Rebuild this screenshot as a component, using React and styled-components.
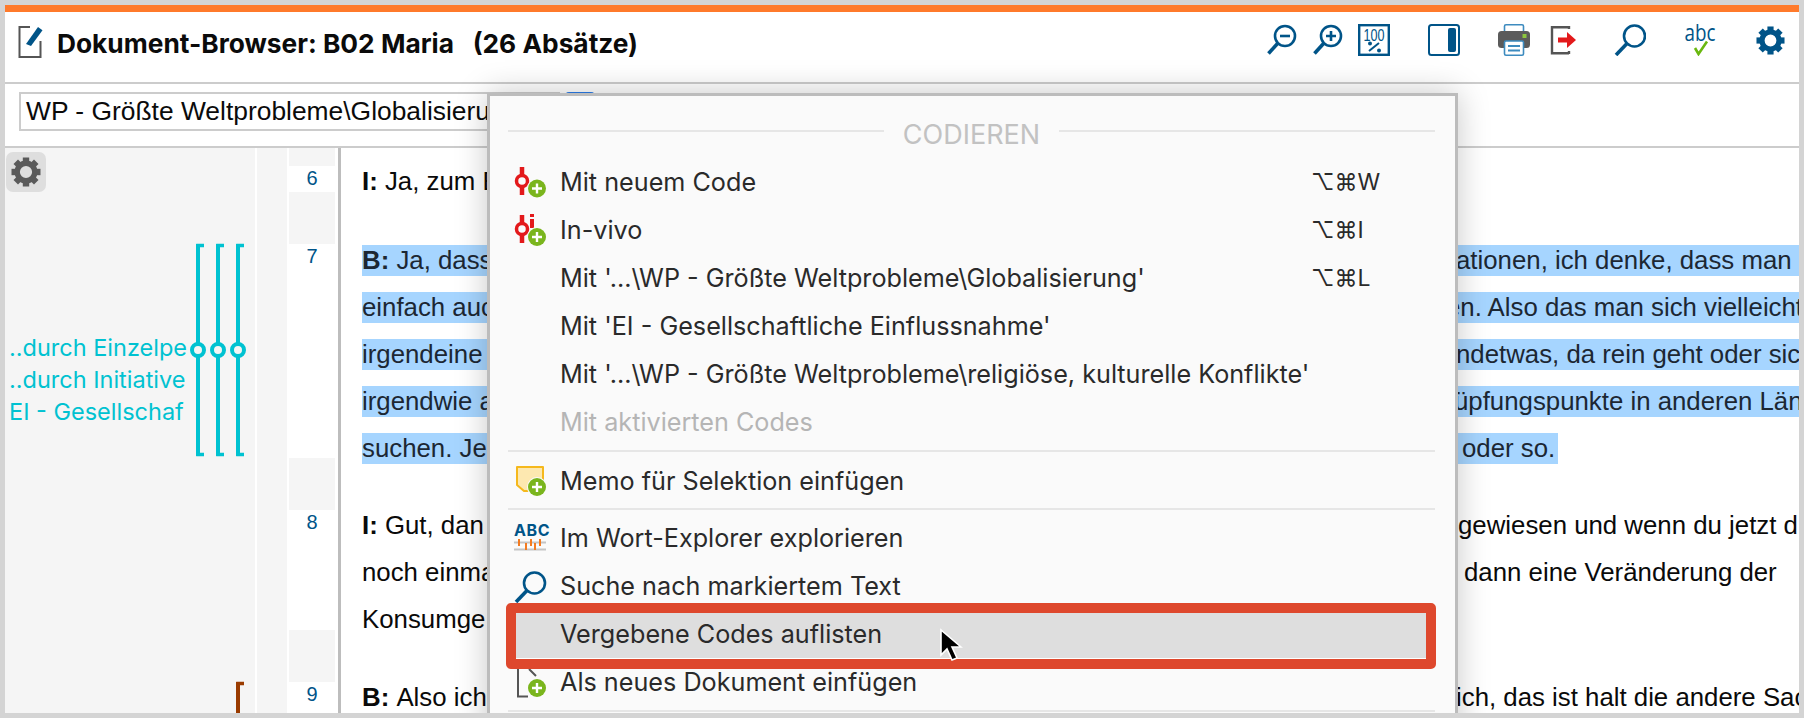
import React from 'react'
import styled, { createGlobalStyle } from 'styled-components'

const blue = '#005488'
const cyan = '#00c2d1'

const Global = createGlobalStyle`
  html, body { margin: 0; padding: 0; background: #d4d4d4; }
  #root { height: 718px; }
`

const Frame = styled.div`
  height: 718px;
  box-sizing: border-box;
  padding: 5px;
`
const Main = styled.div`
  position: relative;
  height: 708px;
  background: #fff;
  overflow: hidden;
  display: flex;
  flex-direction: column;
  font-family: "Liberation Sans", Arial, sans-serif;
`
const OrangeBar = styled.div`
  height: 7px;
  background: #ff7a2b;
  flex: none;
`
const Header = styled.div`
  height: 72px;
  flex: none;
  box-sizing: border-box;
  display: flex;
  align-items: center;
  padding: 0 13px 14px 13px;
  border-bottom: 2px solid #ccc;
  svg { display: block; }
`
const DocIcon = styled.svg`
  width: 26px;
  height: 34px;
  margin: 4px 13px 0 0;
  flex: none;
`
const Title = styled.h1`
  margin: 6px 0 0;
  font: 700 26.3px Inter, "Liberation Sans", sans-serif;
  color: #0b0b0b;
  white-space: pre;
  flex: 1;
`
const Tool = styled.svg`
  width: 32px;
  height: 32px;
  margin-left: ${p => p.$gap}px;
  flex: none;
`
const GearSlot = styled.div`
  width: 32px;
  height: 32px;
  margin-left: 38px;
  flex: none;
  display: flex;
  align-items: center;
  justify-content: center;
`
const InputBar = styled.div`
  height: 64px;
  box-sizing: border-box;
  padding: 8px 0 0 14px;
  display: flex;
  gap: 4px;
  align-items: flex-start;
  border-bottom: 2px solid #ccc;
  flex: none;
`
const PathInput = styled.div`
  width: 541px;
  height: 39px;
  box-sizing: border-box;
  border: 2px solid #ccc;
  padding-left: 5px;
  font-size: 26.4px;
  line-height: 35px;
  color: #0b0b0b;
  white-space: nowrap;
`
const BlueButton = styled.div`
  width: 32px;
  height: 39px;
  background: #2b7de9;
  border-radius: 5px;
`
const Body = styled.div`
  flex: 1;
  display: flex;
  min-height: 0;
`
const CodePanel = styled.div`
  position: relative;
  width: 250px;
  flex: none;
  background: #f5f5f5;
  padding-top: 4px;
`
const GearBox = styled.div`
  width: 40px;
  height: 40px;
  margin-left: 1px;
  border-radius: 7px;
  background: #dedede;
  display: flex;
  align-items: center;
  justify-content: center;
`
const Labels = styled.div`
  margin: 140px 0 0 4px;
`
const CodeLabel = styled.div`
  font: 400 23.5px/32px Inter, sans-serif;
  color: ${cyan};
  white-space: nowrap;
`
const Stripes = styled.svg`
  position: absolute;
  left: 185px;
  top: 0;
  width: 65px;
  height: 565px;
`
const Gutter = styled.div`
  width: 30px;
  flex: none;
  margin: 0 2px;
  background: #f5f5f5;
`
const Numbers = styled.div`
  width: 46px;
  flex: none;
  background: #f5f5f5;
  margin-right: 3px;
  overflow: hidden;
`
const NumCell = styled.div`
  height: ${p => p.$h}px;
  margin-top: ${p => p.$gap}px;
  background: #fff;
  color: ${blue};
  font-size: 20px;
  line-height: 24px;
  text-align: center;
`
const TextPane = styled.div`
  flex: 1;
  min-width: 0;
  border-left: 3px solid #bdbdbd;
  padding-left: 21px;
  overflow: hidden;
`
const Paragraph = styled.div`
  margin-top: ${p => p.$gap}px;
`
const Line = styled.div`
  display: flex;
  height: 31px;
  margin-bottom: 16px;
  width: ${p => p.$w}px;
  background: ${p => (p.$sel ? '#a6d5ff' : 'transparent')};
  color: ${p => (p.$sel ? '#1c2733' : '#0a0a0a')};
  font-size: 25.8px;
  line-height: 31px;
  white-space: nowrap;
`
const Head = styled.span`
  flex: 0 0 1090px;
  b { font-weight: 700; }
`
const Tail = styled.span`
  margin-left: ${p => p.$at}px;
`
const Popup = styled.div`
  position: absolute;
  left: 482px;
  top: 88px;
  width: 971px;
  height: 660px;
  box-sizing: border-box;
  background: #fafafa;
  border: 3px solid #bcbcbc;
  box-shadow: 0 0 30px rgba(0, 0, 0, 0.22);
  padding: 0 20px 0 18px;
  font-family: Inter, sans-serif;
  color: #2a2a2a;
`
const MenuHead = styled.div`
  height: 63px;
  box-sizing: border-box;
  padding-top: 7px;
  display: flex;
  align-items: center;
  gap: 19px;
`
const HeadRule = styled.div`
  flex: 1;
  height: 2px;
  background: #e6e6e6;
`
const HeadText = styled.div`
  font-size: 27px;
  padding-top: 6px;
  color: #c2c2c2;
`
const Row = styled.div`
  position: relative;
  height: 48px;
  display: flex;
  align-items: center;
  font-size: 25.2px;
  color: ${p => (p.$off ? '#b5b5b5' : '#2a2a2a')};
  padding-left: 6px;
  ${p => p.$hot && `
    z-index: 1;
    &::before {
      content: '';
      position: absolute;
      z-index: -1;
      left: -2px;
      right: -1px;
      top: -8px;
      bottom: -10px;
      box-sizing: border-box;
      background: #dedede;
      border: 10px solid #de482d;
      border-radius: 5px;
      box-shadow: inset 0 -1px 0 #fff;
    }
  `}
`
const IconSlot = styled.div`
  width: 32px;
  height: 32px;
  margin-right: 14px;
  flex: none;
  svg { display: block; overflow: visible; }
`
const RowLabel = styled.span`
  flex: 1;
  white-space: nowrap;
  margin-bottom: 2px;
`
const Shortcut = styled.span`
  width: 124px;
  flex: none;
  font-family: Inter, "DejaVu Sans", sans-serif;
  font-size: 23px;
  margin-bottom: 2px;
`
const Separator = styled.div`
  height: 2px;
  background: #e6e6e6;
  margin: ${p => p.$top}px 0 ${p => p.$bottom}px;
`
const Pointer = styled.svg`
  position: absolute;
  left: 431px;
  top: 17px;
  width: 24px;
  height: 34px;
`

function Gear({ color, size }) {
  const teeth = [0, 45, 90, 135, 180, 225, 270, 315]
  return (
    <svg width={size} height={size} viewBox="0 0 30 30">
      <circle cx="15" cy="15" r="8.800" fill="none" stroke={color} strokeWidth="5.400" />
      {teeth.map(a => (
        <rect key={a} x="11.800" y="0.500" width="6.400" height="6" fill={color} transform={`rotate(${a} 15 15)`} />
      ))}
    </svg>
  )
}

function Lens({ children, big }) {
  return (
    <g fill="none" stroke={blue}>
      <circle cx={big ? 20.5 : 19} cy="12" r={big ? 10.5 : 10} strokeWidth="2.6" />
      <path d={big ? 'M13 19.5L2 31' : 'M12 19L2.5 29.5'} strokeWidth="3.6" />
      {children}
    </g>
  )
}

function Badge({ cx = 23, cy = 21 }) {
  return (
    <g>
      <circle cx={cx} cy={cy} r="10" fill="#fafafa" />
      <circle cx={cx} cy={cy} r="9" fill="#7ab51d" />
      <path d={`M${cx - 5} ${cy}h10M${cx} ${cy - 5}v10`} stroke="#fff" strokeWidth="2.4" />
    </g>
  )
}

function CodeMark({ invivo }) {
  return (
    <svg width="32" height="32" viewBox="0 0 32 32">
      <path d="M8 0v28" stroke="#e3191b" strokeWidth="4.5" />
      <circle cx="8" cy="14" r="5.5" fill="#fafafa" stroke="#e3191b" strokeWidth="3.5" />
      {invivo && <path d="M18 -1v3M18 4v9" stroke="#e3191b" strokeWidth="4" />}
      <Badge cy={invivo ? 22 : 21.5} />
    </svg>
  )
}

function MemoMark() {
  return (
    <svg width="32" height="32" viewBox="0 0 32 32">
      <path d="M3 1h26v24H10l-7-6z" fill="#fde8b0" stroke="#f5b81c" strokeWidth="2" strokeLinejoin="round" />
      <Badge />
    </svg>
  )
}

function WordMark() {
  return (
    <svg width="32" height="32" viewBox="0 0 32 32">
      <text x="0" y="13" fontFamily="Inter, sans-serif" fontWeight="700" fontSize="16" letterSpacing="0.6" fill={blue}>ABC</text>
      <path d="M0 19.5h32M0 26.5h32" stroke="#c4c4c4" strokeWidth="2" />
      <path d="M5 16v7M12 20v7M17 16v7M21 20v7M26 16v7" stroke="#f47b20" strokeWidth="2" />
    </svg>
  )
}

function SearchMark() {
  return (
    <svg width="32" height="32" viewBox="0 0 32 32">
      <Lens big />
    </svg>
  )
}

function DocMark() {
  return (
    <svg width="32" height="32" viewBox="0 0 32 32">
      <path d="M4 0v29.5h10M15 2l7 7" fill="none" stroke="#555" strokeWidth="2" />
      <Badge />
    </svg>
  )
}

const paragraphs = [
  { gap: 18, lines: [{ head: 'Ja, zum Beispiel', who: 'I:' }] },
  {
    gap: 48,
    lines: [
      { sel: true, who: 'B:', head: 'Ja, dass', tail: 'ationen, ich denke, dass man i', at: 4 },
      { sel: true, head: 'einfach auch', tail: 'en. Also das man sich vielleicht', at: -6 },
      { sel: true, head: 'irgendeine', tail: 'ndetwas, da rein geht oder sich', at: 4 },
      { sel: true, head: 'irgendwie a', tail: 'üpfungspunkte in anderen Länd', at: 2 },
      { sel: true, head: 'suchen. Je', tail: 'oder so.', at: 10, w: 1196 },
    ],
  },
  {
    gap: 46,
    lines: [
      { who: 'I:', head: 'Gut, dan', tail: 'gewiesen und wenn du jetzt d', at: 6 },
      { head: 'noch einmal', tail: 'dann eine Veränderung der', at: 12 },
      { head: 'Konsumge' },
    ],
  },
  {
    gap: 47,
    lines: [{ who: 'B:', head: 'Also ich', tail: 'ich, das ist halt die andere Sach', at: 4 }],
  },
]

const numberCells = [
  { n: 6, gap: 18, h: 26 },
  { n: 7, gap: 52, h: 214 },
  { n: 8, gap: 52, h: 120 },
  { n: 9, gap: 52, h: 40 },
]

function Bracket({ x, color, top, bottom, ring }) {
  return (
    <g fill="none" stroke={color} strokeWidth="4">
      <path d={`M${x + 8} ${top + 1.5}H${x + 2}V${bottom - 1.5}H${x + 8}`} strokeWidth="3.6" />
      <path d={`M${x + 2} ${top}V${bottom}`} />
      {ring && <circle cx={x + 2} cy="202" r="6" fill="#f5f5f5" />}
    </g>
  )
}

export default function App() {
  return (
    <Frame>
      <Global />
      <Main>
        <OrangeBar />
        <Header>
          <DocIcon viewBox="0 0 26 34">
            <path d="M12 2H1.5v30h21V16" fill="none" stroke="#555" strokeWidth="2" />
            <path d="M8 19L20 2l4.5 3.2L13 21z" fill={blue} />
          </DocIcon>
          <Title>{'Dokument-Browser: B02 Maria   (26 Absätze)'}</Title>
          <Tool $gap={0} viewBox="0 0 32 32">
            <Lens><path d="M14 12h10" strokeWidth="2.6" /></Lens>
          </Tool>
          <Tool $gap={14} viewBox="0 0 32 32">
            <Lens><path d="M14 12h10M19 7v10" strokeWidth="2.6" /></Lens>
          </Tool>
          <Tool $gap={14} viewBox="0 0 32 32">
            <rect x="1.2" y="1.2" width="29.6" height="29.6" fill="none" stroke={blue} strokeWidth="2.4" />
            <text x="16" y="16.500" textAnchor="middle" fontFamily="'Liberation Sans', sans-serif" fontSize="17" textLength="21" lengthAdjust="spacingAndGlyphs" fill={blue}>100</text>
            <circle cx="12" cy="19.500" r="2" fill={blue} />
            <circle cx="21" cy="26.500" r="2" fill={blue} />
            <path d="M11 27l10-8" stroke={blue} strokeWidth="2" />
          </Tool>
          <Tool $gap={38} viewBox="0 0 32 32">
            <rect x="1" y="1" width="30" height="30" rx="2.5" fill="none" stroke={blue} strokeWidth="2" />
            <rect x="20" y="4" width="8" height="24" rx="2" fill={blue} />
          </Tool>
          <Tool $gap={38} viewBox="0 0 32 32">
            <rect x="6.5" y="0.8" width="19" height="12" rx="1.5" fill="#fff" stroke="#3d8bbf" strokeWidth="1.6" />
            <rect x="0" y="7" width="32" height="17" rx="3.5" fill="#5b5b5b" />
            <rect x="24.5" y="10" width="4" height="4" fill="#8cc63f" />
            <rect x="6.5" y="17" width="19" height="14.2" rx="1.5" fill="#fff" stroke="#3d8bbf" strokeWidth="1.6" />
            <path d="M10 22h12M10 26.5h12" stroke="#3d8bbf" strokeWidth="1.8" />
          </Tool>
          <Tool $gap={17} viewBox="0 0 32 32">
            <path d="M22 3.2H5v26h17M22 2v3M22 27v3" fill="none" stroke="#555" strokeWidth="2.4" />
            <path d="M11 13.5h9V8l9 8-9 8v-5.500h-9z" fill="#e3191b" />
          </Tool>
          <Tool $gap={35} viewBox="0 0 32 32">
            <Lens big />
          </Tool>
          <Tool $gap={38} viewBox="0 0 32 32">
            <text x="16" y="17" textAnchor="middle" fontFamily="'Open Sans', sans-serif" fontSize="24" textLength="31" lengthAdjust="spacingAndGlyphs" fill={blue}>abc</text>
            <path d="M11 24l3.500 6L23 17.500" fill="none" stroke="#6ab80f" strokeWidth="2.6" />
          </Tool>
          <GearSlot><Gear color={blue} size={29} /></GearSlot>
        </Header>
        <InputBar>
          <PathInput>WP - Größte Weltprobleme\Globalisierung</PathInput>
          <BlueButton />
        </InputBar>
        <Body>
          <CodePanel>
            <GearBox><Gear color="#5a5a5a" size={30} /></GearBox>
            <Labels>
              <CodeLabel>..durch Einzelpe</CodeLabel>
              <CodeLabel>..durch Initiative</CodeLabel>
              <CodeLabel>EI - Gesellschaf</CodeLabel>
            </Labels>
            <Stripes viewBox="0 0 65 565">
              <Bracket x={6} color={cyan} top={96} bottom={308} ring />
              <Bracket x={26} color={cyan} top={96} bottom={308} ring />
              <Bracket x={46} color={cyan} top={96} bottom={308} ring />
              <Bracket x={46} color="#9a3b00" top={534} bottom={590} />
            </Stripes>
          </CodePanel>
          <Gutter />
          <Numbers>
            {numberCells.map(c => (
              <NumCell key={c.n} $gap={c.gap} $h={c.h}>{c.n}</NumCell>
            ))}
          </Numbers>
          <TextPane>
            {paragraphs.map((para, i) => (
              <Paragraph key={i} $gap={para.gap}>
                {para.lines.map((l, j) => (
                  <Line key={j} $sel={l.sel} $w={l.w || 1437}>
                    <Head>
                      {l.who && <b>{l.who} </b>}
                      {l.head}
                    </Head>
                    {l.tail && <Tail $at={l.at}>{l.tail}</Tail>}
                  </Line>
                ))}
              </Paragraph>
            ))}
          </TextPane>
        </Body>
        <Popup>
          <MenuHead>
            <HeadRule />
            <HeadText>CODIEREN</HeadText>
            <HeadRule />
          </MenuHead>
          <Row>
            <IconSlot><CodeMark /></IconSlot>
            <RowLabel>Mit neuem Code</RowLabel>
            <Shortcut>⌥⌘W</Shortcut>
          </Row>
          <Row>
            <IconSlot><CodeMark invivo /></IconSlot>
            <RowLabel>In-vivo</RowLabel>
            <Shortcut>⌥⌘I</Shortcut>
          </Row>
          <Row>
            <IconSlot />
            <RowLabel>{"Mit '...\\WP - Größte Weltprobleme\\Globalisierung'"}</RowLabel>
            <Shortcut>⌥⌘L</Shortcut>
          </Row>
          <Row>
            <IconSlot />
            <RowLabel>Mit 'EI - Gesellschaftliche Einflussnahme'</RowLabel>
          </Row>
          <Row>
            <IconSlot />
            <RowLabel>{"Mit '...\\WP - Größte Weltprobleme\\religiöse, kulturelle Konflikte'"}</RowLabel>
          </Row>
          <Row $off>
            <IconSlot />
            <RowLabel>Mit aktivierten Codes</RowLabel>
          </Row>
          <Separator $top={3} $bottom={6} />
          <Row>
            <IconSlot><MemoMark /></IconSlot>
            <RowLabel>Memo für Selektion einfügen</RowLabel>
          </Row>
          <Separator $top={2} $bottom={5} />
          <Row>
            <IconSlot><WordMark /></IconSlot>
            <RowLabel>Im Wort-Explorer explorieren</RowLabel>
          </Row>
          <Row>
            <IconSlot><SearchMark /></IconSlot>
            <RowLabel>Suche nach markiertem Text</RowLabel>
          </Row>
          <Row $hot>
            <IconSlot />
            <RowLabel>Vergebene Codes auflisten</RowLabel>
            <Pointer viewBox="0 0 24 34">
              <path d="M2 2v25l6-6 5 11 5-2-5-11h9z" fill="#000" stroke="#fff" strokeWidth="1.6" />
            </Pointer>
          </Row>
          <Row>
            <IconSlot><DocMark /></IconSlot>
            <RowLabel>Als neues Dokument einfügen</RowLabel>
          </Row>
          <Separator $top={3} $bottom={0} />
        </Popup>
      </Main>
    </Frame>
  )
}
